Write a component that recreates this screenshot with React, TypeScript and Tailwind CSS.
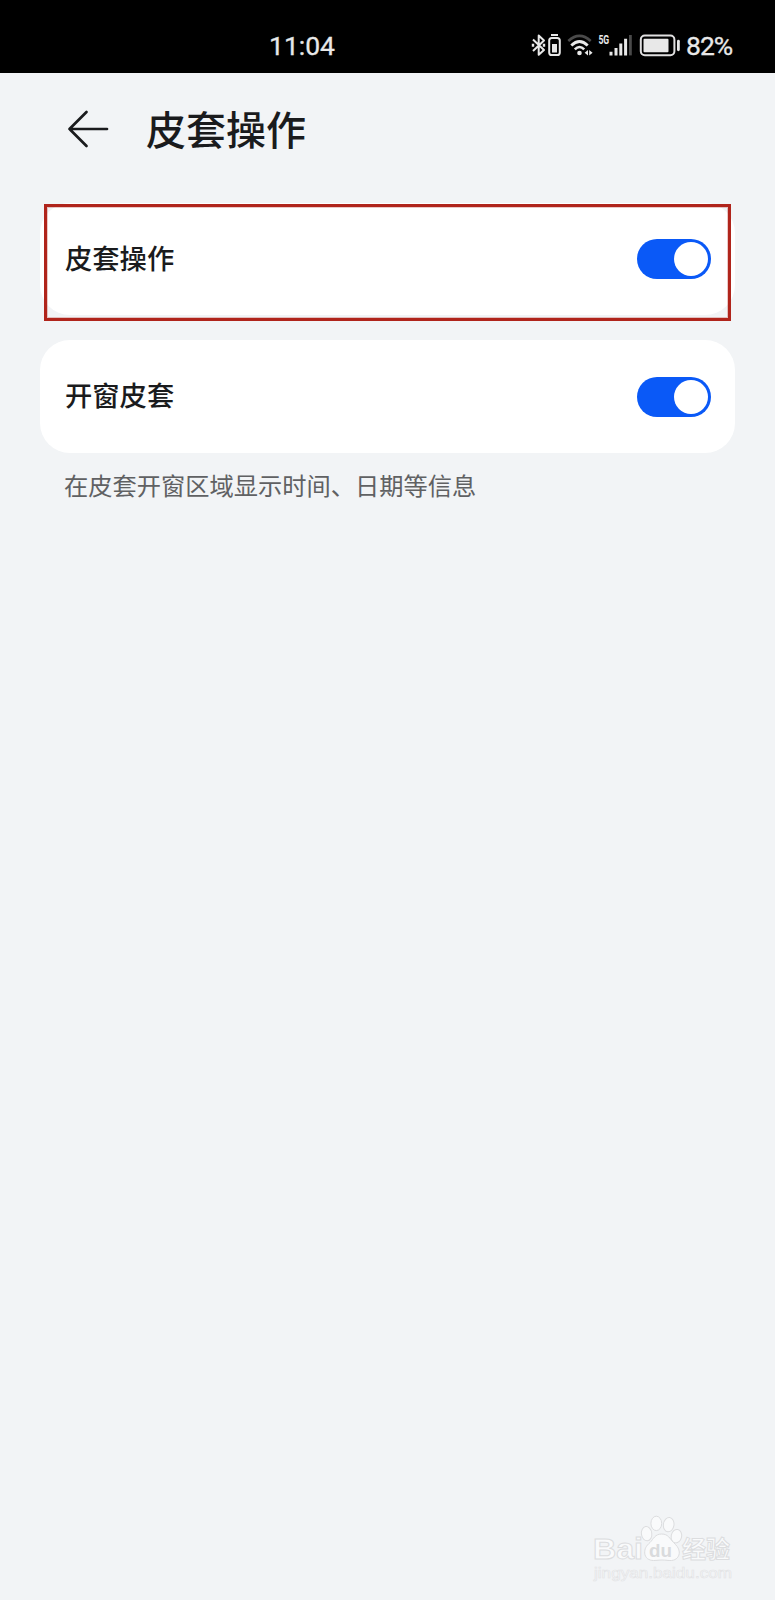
import { useState } from 'react';

interface ToggleProps {
  checked: boolean;
  label: string;
  onChange: () => void;
}

const Toggle = ({ checked, label, onChange }: ToggleProps) => (
  <button
    type="button"
    role="switch"
    aria-checked={checked}
    aria-label={label}
    onClick={onChange}
    className={`flex h-10 w-[74px] shrink-0 items-center rounded-full px-[3.5px] ${
      checked ? 'justify-end bg-[#0a59f7]' : 'justify-start bg-gray-300'
    }`}
  >
    <span className="size-[34px] rounded-full bg-white" />
  </button>
);

const StatusIcons = () => (
  <svg width="150" height="28" viewBox="530 32 150 28" fill="none" className="shrink-0">
    {/* Bluetooth */}
    <path d="M533 39.5 L544 50 L538.7 54.8 V35.6 L544 40.5 L533 51" stroke="#e8e8e8" strokeWidth="2" strokeLinejoin="round" />
    <path d="M531.8 43.8 h2.4 v3 h-2.4z M542.8 43.8 h2.4 v3 h-2.4z" fill="#e8e8e8" />
    {/* Accessory battery */}
    <path d="M551 35 h7" stroke="#e8e8e8" strokeWidth="2" />
    <rect x="549.2" y="38" width="10.6" height="17" rx="2.6" stroke="#e8e8e8" strokeWidth="2" />
    <rect x="552" y="44" width="5" height="8.5" fill="#e8e8e8" />
    {/* Wi-Fi */}
    <path d="M568.3 41 Q579.5 30.8 590.7 41" stroke="#4a4a4a" strokeWidth="2.6" />
    <path d="M571.3 45.4 Q579.5 37.4 587.7 45.4" stroke="#e8e8e8" strokeWidth="2.8" />
    <path d="M574.8 49.4 Q579.5 44.6 584.2 49.4" stroke="#e8e8e8" strokeWidth="2.6" />
    <circle cx="579.5" cy="53" r="2.3" fill="#e8e8e8" />
    <path d="M588 50 v5.6 l-3.4 -2.8z M589.2 50 v5.6 l3.4 -2.8z" fill="#e8e8e8" />
    {/* Cellular */}
    <text x="598.4" y="44.2" fontSize="13" fontWeight="700" fill="#e8e8e8" textLength="10.8" lengthAdjust="spacingAndGlyphs">5G</text>
    <path d="M611 55.4 v-3.6 M616 55.4 v-7.4 M620.8 55.4 v-12 M625.6 55.4 v-16.6" stroke="#e8e8e8" strokeWidth="3" />
    <path d="M630.4 55.4 v-20.4" stroke="#4a4a4a" strokeWidth="2.8" />
    {/* Battery */}
    <rect x="640.8" y="35.6" width="33.6" height="19.6" rx="4" stroke="#e0dfe0" strokeWidth="2" />
    <rect x="643.5" y="38.7" width="25" height="13.6" rx="1" fill="#e8e8e8" />
    <path d="M678.4 41.2 v8.6" stroke="#e8e8e8" strokeWidth="2.8" strokeLinecap="round" />
  </svg>
);

const StatusBar = () => (
  <div className="flex h-[73px] items-center justify-between bg-black pt-[19px] pr-[40px] pl-[269px] text-[26.5px] leading-none text-[#e8e8e8]">
    <span className="[-webkit-text-stroke:0.3px]">11:04</span>
    <div className="flex items-center gap-[6px]">
      <StatusIcons />
      <span className="w-[49px] whitespace-nowrap tracking-[-1px] [-webkit-text-stroke:0.3px]">82%</span>
    </div>
  </div>
);

const Watermark = () => (
  <svg width="146" height="72" viewBox="590 1512 146 72" className="ml-auto font-['Liberation_Sans','Noto_Sans_CJK_SC',sans-serif]" fill="#f9fafb" stroke="#dcdddf" strokeWidth="1">
    <text x="593" y="1559" fontSize="30" fontWeight="700" textLength="50" lengthAdjust="spacingAndGlyphs">Bai</text>
    <ellipse cx="646.6" cy="1533.7" rx="5.2" ry="7.2" transform="rotate(-8 646.6 1533.7)" />
    <ellipse cx="656.3" cy="1523.4" rx="5.4" ry="7.2" />
    <ellipse cx="668.7" cy="1524.7" rx="5.3" ry="7.2" transform="rotate(8 668.7 1524.7)" />
    <ellipse cx="676.4" cy="1536.2" rx="5.2" ry="6.8" transform="rotate(12 676.4 1536.2)" />
    <path d="M661.5 1534 C655 1534 653.5 1539 650 1542.5 C646 1546 644.5 1549 644.7 1553 C645 1558 649 1560.5 653.5 1560.5 C657 1560.5 659 1560 662 1560 C666 1560 668 1560.7 671.5 1560.5 C676.5 1560 679.5 1556.5 679.3 1552 C679 1547.5 676 1545 673.5 1542.5 C669.5 1538.5 668.5 1534 661.5 1534z" />
    <text x="649" y="1557" fontSize="18" fontWeight="700" fill="#d9dbdd" stroke="none" textLength="23" lengthAdjust="spacingAndGlyphs">du</text>
    <text x="682" y="1557.5" fontSize="24" fontWeight="700" textLength="48" lengthAdjust="spacingAndGlyphs">经验</text>
    <text x="594" y="1577.5" fontSize="14" fill="#fafbfb" stroke="#e2e3e5" strokeWidth="0.6" textLength="138" lengthAdjust="spacingAndGlyphs">jingyan.baidu.com</text>
  </svg>
);

export default function App() {
  const [coverEnabled, setCoverEnabled] = useState(true);
  const [windowEnabled, setWindowEnabled] = useState(true);

  return (
    <div className="flex h-[1600px] w-[775px] flex-col bg-[#f2f4f6] font-[Roboto,'Noto_Sans_CJK_SC',sans-serif] text-[#1a1b1d]">
      <StatusBar />

      <header className="flex h-[113px] items-center pl-[67px]">
        <svg width="43" height="38" viewBox="0 0 43 38" fill="none" stroke="currentColor" strokeWidth="2.7" strokeLinecap="round" strokeLinejoin="round" className="mb-px">
          <path d="M19.5 2 L2.5 19 L19.5 36 M2.5 19 H40" />
        </svg>
        <h1 className="ml-[36px] pt-1 text-[40px] leading-none font-medium">皮套操作</h1>
      </header>

      <main className="flex flex-1 flex-col px-10 pt-[17px]">
        <section className="relative flex h-[112px] items-center justify-between rounded-[30px] bg-white pr-6 pl-[25px]">
          <span className="pt-[3px] text-[27.3px] leading-none font-medium">皮套操作</span>
          <Toggle label="皮套操作" checked={coverEnabled} onChange={() => setCoverEnabled(!coverEnabled)} />
          {/* Highlight around the first setting */}
          <div className="pointer-events-none absolute top-px right-1 left-1 h-[117px] border-3 border-[#b0241b] ring-1 ring-[#b0241b]/25 ring-inset" />
        </section>

        <section className="mt-[25px] flex h-[113px] items-center justify-between rounded-[30px] bg-white pr-6 pl-[25px]">
          <span className="pt-[3px] text-[27.3px] leading-none font-medium">开窗皮套</span>
          <Toggle label="开窗皮套" checked={windowEnabled} onChange={() => setWindowEnabled(!windowEnabled)} />
        </section>

        <p className="mt-[22px] pl-6 text-[24.25px] leading-none text-[#606163]">在皮套开窗区域显示时间、日期等信息</p>
      </main>

      <footer className="flex pr-[39px] pb-4">
        <Watermark />
      </footer>
    </div>
  );
}
